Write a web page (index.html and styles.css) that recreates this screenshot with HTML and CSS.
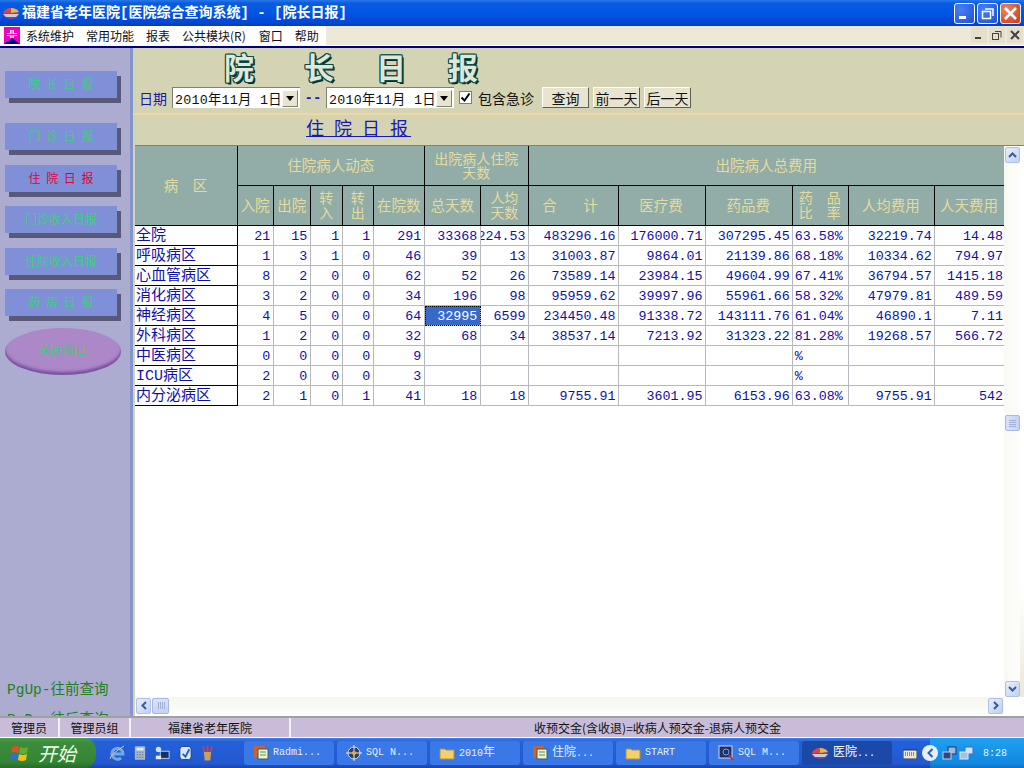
FILE: index.html
```html
<!DOCTYPE html>
<html lang="zh">
<head>
<meta charset="utf-8">
<title>院长日报</title>
<link rel="stylesheet" href="styles.css">
</head>
<body>
<div class="app">
  <header class="titlebar">
    <svg class="app-icon" width="18" height="14" viewBox="0 0 18 14"><ellipse cx="9" cy="8" rx="8" ry="5" fill="#7a4a70"/><path d="M9 7V2C5 2 2 4 1 7z" fill="#d04848"/><path d="M9 7V2c4 0 7 2 8 4z" fill="#e8b840"/><path d="M1 8h16l-3 3H4z" fill="#c8c8e8"/></svg>
    <span class="title-text">福建省老年医院[医院综合查询系统] - [院长日报]</span>
    <span class="win-btns">
      <span class="wb wb-blue"><svg width="21" height="21" viewBox="0 0 21 21"><rect x="5" y="13" width="7" height="3" fill="#fff"/></svg></span>
      <span class="wb wb-blue"><svg width="21" height="21" viewBox="0 0 21 21" fill="none" stroke="#fff"><rect x="5.500" y="8.500" width="8" height="7" stroke-width="1.500"/><path d="M8 6h8v7" stroke-width="1.500"/></svg></span>
      <span class="wb wb-red"><svg width="21" height="21" viewBox="0 0 21 21" stroke="#fff" stroke-width="2.600"><path d="M5 5l11 11M16 5L5 16"/></svg></span>
    </span>
  </header>
  <nav class="menubar">
    <div class="menu-white">
      <svg class="menu-icon" width="16" height="17" viewBox="0 0 16 17"><rect width="16" height="17" fill="#f000c0"/><path d="M0 17l8-6 8 6z" fill="#000090"/><path d="M6 3h4v3h3v3h-3v2H6V9H3V6h3z" fill="#fff"/><path d="M3 7.500h10M8 3v8" stroke="#f000c0"/></svg>
      <span class="m1">系统维护</span><span class="m2">常用功能</span><span class="m3">报表</span><span class="m4">公共模块(R)</span><span class="m5">窗口</span><span class="m6">帮助</span>
    </div>
    <div class="mdi-btns">
      <span class="mb"><svg width="16" height="14" viewBox="0 0 16 14"><rect x="4" y="9" width="6" height="2" fill="#444"/></svg></span>
      <span class="mb"><svg width="16" height="14" viewBox="0 0 16 14" fill="none" stroke="#444"><rect x="3.500" y="5.500" width="6" height="6"/><path d="M6 3.500h6v6"/></svg></span>
      <span class="mb"><svg width="16" height="14" viewBox="0 0 16 14" stroke="#444" stroke-width="2"><path d="M4 3l8 8M12 3l-8 8"/></svg></span>
    </div>
  </nav>
  <div class="main">
    <aside class="sidebar">
      <div class="side-btn sb-first">院 长 日 报</div>
      <div class="side-btn sb-second">门 诊 日 报</div>
      <div class="side-btn sb-active">住 院 日 报</div>
      <div class="side-btn">门诊收入日报</div>
      <div class="side-btn">住院收入日报</div>
      <div class="side-btn">药 房 日 报</div>
      <div class="side-oval">关闭窗口</div>
      <div class="side-help">PgUp-往前查询</div>
      <div class="side-help">PgDn-往后查询</div>
    </aside>
    <section class="content">
      <div class="top">
        <div class="big-title"><span class="t1">院</span><span>长</span><span>日</span><span>报</span></div>
        <div class="controls">
          <span class="lbl">日期</span>
          <div class="combo"><span class="combo-text">2010年11月 1日</span><span class="arrow"><svg width="8" height="5" viewBox="0 0 8 5"><path d="M0 0h8L4 5z"/></svg></span></div>
          <span class="dash">--</span>
          <div class="combo"><span class="combo-text">2010年11月 1日</span><span class="arrow"><svg width="8" height="5" viewBox="0 0 8 5"><path d="M0 0h8L4 5z"/></svg></span></div>
          <span class="check"><svg width="11" height="11" viewBox="0 0 11 11" fill="none" stroke="#000" stroke-width="2"><path d="M1.500 5.500l3 3 5-7"/></svg></span>
          <span class="check-lbl">包含急诊</span>
          <button class="btn">查询</button>
          <button class="btn">前一天</button>
          <button class="btn">后一天</button>
        </div>
      </div>
      <div class="sub"><a class="sub-link">住 院 日 报</a></div>
      <div class="grid-area">
        <div class="grid-row">
          <div class="table-clip">
            <table class="report">
              <colgroup><col class="c0"><col class="c1"><col class="c2"><col class="c3"><col class="c4"><col class="c5"><col class="c6"><col class="c7"><col class="c8"><col class="c9"><col class="c10"><col class="c11"><col class="c12"><col class="c13"></colgroup>
              <thead>
                <tr class="h1"><th rowspan="2" class="ward">病　区</th><th colspan="5">住院病人动态</th><th colspan="2" class="tight">出院病人住院<br>天数</th><th colspan="6">出院病人总费用</th></tr>
                <tr class="h2"><th>入院</th><th>出院</th><th class="tight">转<br>入</th><th class="tight">转<br>出</th><th>在院数</th><th>总天数</th><th class="tight">人均<br>天数</th><th class="wide">合　计</th><th>医疗费</th><th>药品费</th><th class="tight">药　品<br>比　率</th><th>人均费用</th><th>人天费用</th></tr>
              </thead>
              <tbody>
                <tr><td class="name">全院</td><td>21</td><td>15</td><td>1</td><td>1</td><td>291</td><td>33368</td><td><div class="clip"><span>2224.53</span></div></td><td>483296.16</td><td>176000.71</td><td>307295.45</td><td class="pct">63.58%</td><td>32219.74</td><td>14.48</td></tr>
                <tr><td class="name">呼吸病区</td><td>1</td><td>3</td><td>1</td><td>0</td><td>46</td><td>39</td><td>13</td><td>31003.87</td><td>9864.01</td><td>21139.86</td><td class="pct">68.18%</td><td>10334.62</td><td>794.97</td></tr>
                <tr><td class="name">心血管病区</td><td>8</td><td>2</td><td>0</td><td>0</td><td>62</td><td>52</td><td>26</td><td>73589.14</td><td>23984.15</td><td>49604.99</td><td class="pct">67.41%</td><td>36794.57</td><td>1415.18</td></tr>
                <tr><td class="name">消化病区</td><td>3</td><td>2</td><td>0</td><td>0</td><td>34</td><td>196</td><td>98</td><td>95959.62</td><td>39997.96</td><td>55961.66</td><td class="pct">58.32%</td><td>47979.81</td><td>489.59</td></tr>
                <tr><td class="name">神经病区</td><td>4</td><td>5</td><td>0</td><td>0</td><td>64</td><td class="sel">32995</td><td>6599</td><td>234450.48</td><td>91338.72</td><td>143111.76</td><td class="pct">61.04%</td><td>46890.1</td><td>7.11</td></tr>
                <tr><td class="name">外科病区</td><td>1</td><td>2</td><td>0</td><td>0</td><td>32</td><td>68</td><td>34</td><td>38537.14</td><td>7213.92</td><td>31323.22</td><td class="pct">81.28%</td><td>19268.57</td><td>566.72</td></tr>
                <tr><td class="name">中医病区</td><td>0</td><td>0</td><td>0</td><td>0</td><td>9</td><td></td><td></td><td></td><td></td><td></td><td class="pct">%</td><td></td><td></td></tr>
                <tr><td class="name">ICU病区</td><td>2</td><td>0</td><td>0</td><td>0</td><td>3</td><td></td><td></td><td></td><td></td><td></td><td class="pct">%</td><td></td><td></td></tr>
                <tr><td class="name">内分泌病区</td><td>2</td><td>1</td><td>0</td><td>1</td><td>41</td><td>18</td><td>18</td><td>9755.91</td><td>3601.95</td><td>6153.96</td><td class="pct">63.08%</td><td>9755.91</td><td>542</td></tr>
              </tbody>
            </table>
          </div>
          <div class="vscroll">
            <span class="sb-btn"><svg width="9" height="6" viewBox="0 0 9 6" fill="none" stroke="#3a5a9a" stroke-width="2"><path d="M1 5l3.500-3.500L8 5"/></svg></span>
            <span class="v-thumb"><svg width="7" height="8" viewBox="0 0 7 8" stroke="#a0b0d8"><path d="M0 1.500h7M0 3.500h7M0 5.500h7M0 7.500h7"/></svg></span>
            <span class="sb-btn"><svg width="9" height="6" viewBox="0 0 9 6" fill="none" stroke="#3a5a9a" stroke-width="2"><path d="M1 1l3.500 3.500L8 1"/></svg></span>
          </div>
          <div class="grid-edge"></div>
        </div>
        <div class="hscroll">
          <span class="sb-btn"><svg width="6" height="9" viewBox="0 0 6 9" fill="none" stroke="#3a5a9a" stroke-width="2"><path d="M5 1L1.500 4.500 5 8"/></svg></span>
          <span class="h-thumb"><svg width="8" height="7" viewBox="0 0 8 7" stroke="#a0b0d8"><path d="M1.500 0v7M3.500 0v7M5.500 0v7M7.500 0v7"/></svg></span>
          <span class="h-fill"></span>
          <span class="sb-btn"><svg width="6" height="9" viewBox="0 0 6 9" fill="none" stroke="#3a5a9a" stroke-width="2"><path d="M1 1l3.500 3.500L1 8"/></svg></span>
        </div>
      </div>
    </section>
  </div>
  <footer class="status">
    <span class="st st1">管理员</span><span class="st st2">管理员组</span><span class="st st3">福建省老年医院</span><span class="st st4">收预交金(含收退)=收病人预交金-退病人预交金</span>
  </footer>
  <div class="taskbar">
    <div class="start">
      <svg width="20" height="18" viewBox="0 0 20 18"><path d="M2 3q3-2 7 0l-1 6q-4-2-7 0z" fill="#e05020"/><path d="M10 3q4 2 8 0l-1 6q-4 2-8 0z" fill="#60b030"/><path d="M1 10q3-2 7 0l-1 6q-4-2-7 0z" fill="#3070d0"/><path d="M9 10q4 2 8 0l-1 6q-4 2-8 0z" fill="#f0c020"/></svg>
      <span class="start-text">开始</span>
    </div>
    <div class="quick">
      <svg width="17" height="18" viewBox="0 0 17 18" fill="none"><path d="M3 10h11a5.500 5.500 0 1 0-2 4" stroke="#70a8f0" stroke-width="3"/><path d="M1 15Q1 11 15 2" stroke="#e8c860"/></svg>
      <svg width="12" height="18" viewBox="0 0 14 18"><rect x="1" y="1" width="12" height="16" rx="1" fill="#a8b8d0"/><rect x="3" y="3" width="8" height="3" fill="#e0f0e0"/><path d="M3 8h8M3 11h8M3 14h8" stroke="#607090" stroke-dasharray="2 1"/></svg>
      <svg width="16" height="18" viewBox="0 0 18 18"><circle cx="5" cy="5" r="3" fill="#d0e0f8"/><rect x="7" y="7" width="10" height="8" fill="#103070" stroke="#d0d8f0"/><path d="M2 12h6v4H2z" fill="#e8e8e8"/></svg>
      <svg width="15" height="18" viewBox="0 0 16 18"><rect x="2" y="2" width="12" height="14" rx="3" fill="#d8e8f8" stroke="#204080"/><path d="M5 10l3 3 4-8" stroke="#2060c0" stroke-width="2" fill="none"/></svg>
      <svg width="13" height="18" viewBox="0 0 14 18"><path d="M3 8h8l-1 9H4z" fill="#c8a060"/><path d="M4 8L2 2M7 8V1M10 8l2-6" stroke-width="2" stroke="#d04040"/></svg>
    </div>
    <div class="tasks">
      <div class="task"><svg width="16" height="16" viewBox="0 0 16 16"><rect x="1" y="1" width="11" height="12" fill="#d06030"/><rect x="5" y="4" width="10" height="10" fill="#f0f0e0" stroke="#406040"/><path d="M7 7h6M7 10h6" stroke="#40a040"/></svg><span>Radmi...</span></div>
      <div class="task"><svg width="16" height="16" viewBox="0 0 16 16"><circle cx="8" cy="8" r="6" fill="#304060" stroke="#d8d8e8"/><path d="M8 0v16M0 8h16" stroke="#e8e8f0"/><circle cx="8" cy="8" r="2" fill="#e8b040"/></svg><span>SQL N...</span></div>
      <div class="task"><svg width="16" height="14" viewBox="0 0 16 14"><path d="M1 3h5l1 1h8v9H1z" fill="#f0d070" stroke="#b09030"/></svg><span>2010<span class="cjk">年</span></span></div>
      <div class="task"><svg width="16" height="16" viewBox="0 0 16 16"><rect x="1" y="1" width="11" height="12" fill="#d06030"/><rect x="5" y="4" width="10" height="10" fill="#f0f0e0" stroke="#406040"/><path d="M7 7h6M7 10h6" stroke="#40a040"/></svg><span><span class="cjk">住院</span>...</span></div>
      <div class="task"><svg width="16" height="14" viewBox="0 0 16 14"><path d="M1 3h5l1 1h8v9H1z" fill="#f0d070" stroke="#b09030"/></svg><span>START</span></div>
      <div class="task"><svg width="16" height="16" viewBox="0 0 16 16"><rect x="1" y="1" width="13" height="12" fill="#203060" stroke="#d0d8f0"/><circle cx="8" cy="7" r="3" fill="none" stroke="#80a0e0"/><path d="M11 10l4 5" stroke="#c03030" stroke-width="2"/></svg><span>SQL M...</span></div>
      <div class="task task-on"><svg width="18" height="14" viewBox="0 0 18 14"><ellipse cx="9" cy="8" rx="8" ry="5" fill="#7a4a70"/><path d="M9 7V2C5 2 2 4 1 7z" fill="#d04848"/><path d="M9 7V2c4 0 7 2 8 4z" fill="#e8b840"/><path d="M1 8h16l-3 3H4z" fill="#c8c8e8"/></svg><span><span class="cjk">医院</span>...</span></div>
    </div>
    <svg class="kbd" width="14" height="12" viewBox="0 0 14 12"><rect x="0" y="3" width="14" height="9" fill="#e8e8e0" stroke="#333"/><path d="M2 6h10M2 8h10" stroke="#333" stroke-dasharray="1 1"/></svg>
    <div class="tray">
      <span class="tray-chev"><svg width="7" height="10" viewBox="0 0 7 10" fill="none" stroke="#2060c0" stroke-width="2"><path d="M5.500 1L1.500 5l4 4"/></svg></span>
      <svg width="15" height="15" viewBox="0 0 15 15"><rect x="6" y="1" width="8" height="7" fill="#a0b8e0" stroke="#203060"/><rect x="1" y="6" width="8" height="7" fill="#304880" stroke="#c0d0f0"/></svg>
      <svg width="15" height="15" viewBox="0 0 15 15"><rect x="6" y="1" width="8" height="7" fill="#d0e0f8" stroke="#4070b0"/><rect x="1" y="6" width="8" height="7" fill="#a0c0f0" stroke="#e0e8f8"/></svg>
      <span class="clock">8:28</span>
    </div>
  </div>
</div>
</body>
</html>
```

FILE: styles.css
```css
* { box-sizing: border-box; }
html, body { margin: 0; padding: 0; width: 1024px; height: 768px; overflow: hidden; }
body { font-family: "Noto Sans CJK SC", "Liberation Sans", sans-serif; }
.app { width: 1024px; height: 768px; display: flex; flex-direction: column; background: #d4d4b4; }

/* title bar */
.titlebar { height: 26px; flex: none; display: flex; align-items: center; padding: 0 3px 0 2px; color: #fff;
  background: linear-gradient(#2a78e8 0, #0a5ce0 12%, #0055e5 50%, #0048d8 85%, #0a3cb0 100%); }
.app-icon { flex: none; margin-right: 2px; }
.title-text { font-size: 14px; font-weight: 700; white-space: nowrap; line-height: 26px; font-family: "Liberation Mono", "Noto Sans CJK SC", monospace; }
.win-btns { margin-left: auto; display: flex; gap: 2px; }
.wb { width: 21px; height: 21px; border: 1px solid #fff; border-radius: 3px; display: block; overflow: hidden; }
.wb svg { display: block; margin: -1px; }
.wb-blue { background: radial-gradient(circle at 30% 30%, #4a80f0, #1c50d8); }
.wb-red { background: radial-gradient(circle at 30% 30%, #e88868, #c83818); }

/* menu */
.menubar { height: 22px; flex: none; display: flex; background: #ece9d8; border-bottom: 2px solid #000080; box-shadow: inset 0 -1px 0 #fff; padding-bottom: 1px; }
.menu-white { width: 326px; background: #fff; display: flex; align-items: center; font-size: 12px; line-height: 20px; color: #111; padding-left: 4px; }
.menu-icon { flex: none; margin-right: 6px; }
.menu-white span { white-space: nowrap; }
.m1, .m2, .m3, .m5 { margin-right: 12px; }
.m4 { margin-right: 13px; }
.mdi-btns { margin-left: auto; display: flex; gap: 2px; padding: 1px 1px 0 0; }
.mb { width: 16px; height: 16px; background: #e4e0cc; display: block; }
.mb svg { display: block; margin-top: 1px; }

/* main */
.main { height: 670px; flex: none; display: flex; overflow: hidden; border-bottom: 2px solid #a0a0a0; }
.sidebar { width: 133px; flex: none; background: #acacd0; border-right: 3px solid #8494cc; padding: 23px 0 0 5px; display: flex; flex-direction: column; overflow: hidden; }
.side-btn { width: 112px; height: 27px; flex: none; margin-bottom: 15px; background: #8090d8; box-shadow: 4px 5px 0 #585878; color: #3ccf80; font-size: 12px; line-height: 26px; text-align: center; white-space: nowrap; word-spacing: 3px; }
.sb-first { margin-bottom: 25px; }
.side-btn:nth-child(3), .side-btn:nth-child(5) { margin-bottom: 14px; }
.sb-active { color: #e00038; }
.side-oval { width: 116px; height: 47px; flex: none; margin-top: -3px; border-radius: 50%; background: #ac88c8; box-shadow: inset 0 -3px 3px #7a509e; color: #40c878; font-size: 12px; line-height: 44px; text-align: center; }
.side-help { flex: none; margin: 0 0 0 2px; font-size: 14.5px; line-height: 22px; color: #208020; white-space: nowrap; font-family: "Liberation Mono", "Noto Sans CJK SC", monospace; }
.side-oval + .side-help { margin-top: auto; margin-bottom: 8px; }
.side-help:last-child { margin-bottom: -15px; }

/* top */
.content { flex: 1; min-width: 0; display: flex; flex-direction: column; }
.top { height: 67px; flex: none; border-bottom: 2px solid #f0d898; padding-left: 6px; }
.big-title { display: flex; gap: 42px; height: 39px; padding: 1px 0 0 85px; font-size: 30px; line-height: 34px; font-weight: 700; color: #dfe8d8;
  text-shadow: 1px 0 0 #0c4a48, -1px 0 0 #0c4a48, 0 1px 0 #0c4a48, 0 -1px 0 #0c4a48, 1px 1px 0 #0c4a48, -1px -1px 0 #0c4a48, 1px -1px 0 #0c4a48, -1px 1px 0 #0c4a48, 2px 2px 0 #0a2a28; }
.t1 { margin-right: 8px; }
.controls { display: flex; align-items: center; height: 21px; font-size: 14px; color: #111; }
.lbl { color: #1818a8; width: 33px; font-size: 14px; white-space: nowrap; }
.dash { color: #1818c0; width: 26px; text-align: center; font-weight: 700; font-family: "Liberation Mono", monospace; }
.combo { width: 128px; height: 21px; background: #fff; display: flex; align-items: center; padding: 1px 2px 1px 2px; border-top: 1px solid #808070; border-left: 1px solid #808070; }
.combo-text { flex: 1; min-width: 0; white-space: nowrap; font-size: 13.33px; letter-spacing: 0.25px; font-family: "Liberation Mono", "Noto Sans CJK SC", monospace; }
.arrow { width: 16px; height: 17px; flex: none; background: #e8e4d0; border: 1px solid; border-color: #fff #808070 #808070 #fff; display: flex; align-items: center; justify-content: center; }
.arrow svg { display: block; }
.check { width: 13px; height: 13px; margin: 0 6px 0 5px; background: #fff; border: 1px solid #808070; display: flex; align-items: center; justify-content: center; }
.check-lbl { width: 64px; font-size: 14px; white-space: nowrap; }
.btn { width: 47px; height: 21px; padding: 0; margin-right: 4px; background: #e8e4d0; border: 1px solid; border-color: #fff #606050 #606050 #fff; color: #111; font: 14px/18px "Noto Sans CJK SC", sans-serif; white-space: nowrap; }
.sub { height: 30px; flex: none; padding: 0 0 0 173px; }
.sub-link { color: #1818b8; font-size: 18px; line-height: 25px; text-decoration: underline; letter-spacing: 3px; white-space: nowrap; }

/* grid */
.grid-area { flex: 1; min-height: 0; display: flex; flex-direction: column; margin-left: 2px; background: #fff; border-top: 1px solid #808080; padding-bottom: 2px; }
.grid-row { flex: 1; min-height: 0; display: flex; }
.table-clip { width: 869px; flex: none; overflow: hidden; }
.vscroll { width: 16px; flex: none; display: flex; flex-direction: column; align-items: center; background: linear-gradient(90deg, #f8f8f4, #fdfdfa); padding-top: 1px; }
.sb-btn { width: 15px; height: 16px; flex: none; background: linear-gradient(135deg, #e8eefc, #c0d0f4); border: 1px solid #b0c0e8; border-radius: 2px; display: flex; align-items: center; justify-content: center; }
.v-thumb { width: 15px; height: 16px; margin: 252px 0 auto; background: linear-gradient(90deg, #d8e2fa, #c4d2f4); border: 1px solid #a8b8e0; border-radius: 2px; display: flex; align-items: center; justify-content: center; }
.grid-edge { flex: 1; background: linear-gradient(#fff 0, #fff 80%, #ece9d8 100%); }
.hscroll { height: 17px; flex: none; width: 869px; display: flex; align-items: center; padding-left: 1px; background: linear-gradient(#f6f6f0, #fdfdfa); }
.h-thumb { width: 17px; height: 16px; margin-left: 1px; background: linear-gradient(#d8e2fa, #c4d2f4); border: 1px solid #a8b8e0; border-radius: 2px; display: flex; align-items: center; justify-content: center; }
.h-fill { flex: 1; }
.hscroll .sb-btn:last-child { margin-right: 1px; }

.report { width: 870px; table-layout: fixed; border-collapse: separate; border-spacing: 0; font: 13.33px/17px "Liberation Mono", "Noto Sans CJK SC", monospace; color: #1010a8; }
.c0 { width: 103px; } .c1 { width: 36px; } .c2 { width: 37px; } .c3 { width: 32px; } .c4 { width: 31px; } .c5 { width: 51px; } .c6 { width: 56px; } .c7 { width: 48px; } .c8 { width: 89px; } .c9 { width: 87px; } .c10 { width: 87px; } .c11 { width: 56px; } .c12 { width: 86px; } .c13 { width: 70px; }
.report th { background: #92aca8; color: #e4dc9c; font: 400 14.5px/15px "Noto Sans CJK SC", sans-serif; border-right: 1px solid #000; border-bottom: 1px solid #000; padding: 0 1px 3px 0; text-align: center; overflow: hidden; white-space: nowrap; }
.report th.tight { font-size: 14px; line-height: 14px; padding-bottom: 2px; }
.h2 th { padding-bottom: 2px; }
.h2 th.tight { line-height: 15px; }
.h1 th { height: 40px; }
.h2 th { height: 40px; }
.report th.wide { letter-spacing: 6px; }
.report th.ward { letter-spacing: 0; padding-bottom: 2px; }
.report td { height: 20px; padding: 2px 3px 0 0; border-right: 1px solid #b8b8c0; border-bottom: 1px solid #b8b8c0; text-align: right; white-space: nowrap; overflow: hidden; }
.report td:nth-child(n+9) { padding-right: 2px; }
.report td:last-child { padding-right: 1px; }
.report td.name { text-align: left; padding: 2px 0 0 1px; font-size: 15px; border-right-color: #000; border-bottom-color: #000; }
.report td.pct { text-align: left; padding-left: 2px; }
.report td.sel { background: #3868c8; color: #fff; outline: 1px dotted #000; outline-offset: -1px; }
.clip { display: flex; justify-content: flex-end; overflow: hidden; }
.clip span { flex: none; }

/* status */
.status { height: 20px; flex: none; display: flex; background: #c8bcd8; font-size: 12px; line-height: 19px; color: #111; border-bottom: 1px solid #fff; }
.st { display: block; text-align: center; white-space: nowrap; border-right: 2px solid #f4f0f8; }
.st1 { width: 60px; }
.st2 { width: 71px; }
.st3 { width: 160px; }
.st4 { flex: 1; border-right: 0; }

/* taskbar */
.taskbar { height: 30px; flex: none; display: flex; align-items: center; background: linear-gradient(#3a80e8 0, #2460d8 12%, #2258d0 85%, #1a44a8 100%); color: #fff; }
.start { width: 96px; height: 30px; flex: none; display: flex; align-items: center; gap: 8px; padding-left: 10px; border-radius: 0 12px 12px 0; background: linear-gradient(#48a048 0, #3c8c3c 15%, #358535 80%, #2a6a2a 100%); }
.start-text { font: italic 19px/28px "Noto Sans CJK SC", sans-serif; color: #f0fff0; }
.quick { width: 148px; flex: none; display: flex; align-items: center; gap: 8px; padding-left: 13px; }
.tasks { display: flex; gap: 3px; flex: none; width: 652px; }
.task { width: 90px; height: 24px; flex: none; background: #3a78e8; border-radius: 3px; display: flex; align-items: center; gap: 4px; padding-left: 9px; font: 10px/24px "Liberation Mono", "Noto Sans CJK SC", monospace; white-space: nowrap; overflow: hidden; color: #e8f0ff; }
.cjk { font-size: 12px; }
.task-on { background: #1c48a8; color: #fff; }
.kbd { margin-left: 7px; flex: none; }
.tray { margin-left: auto; width: 94px; height: 30px; flex: none; display: flex; align-items: center; gap: 2px; background: linear-gradient(#20a0f0, #1088e0 85%, #1070c8); }
.tray-chev { width: 16px; height: 16px; flex: none; border-radius: 50%; background: #e8f0ff; margin: 0 2px 0 -8px; display: flex; align-items: center; justify-content: center; }
.clock { margin-left: auto; padding-right: 17px; font: 10px "Liberation Mono", monospace; color: #e8f4ff; }
```
